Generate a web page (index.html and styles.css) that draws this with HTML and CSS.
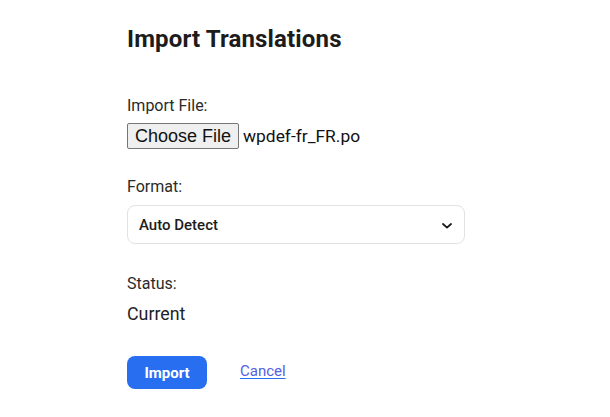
FILE: index.html
```html
<!DOCTYPE html>
<html lang="en">
<head>
<meta charset="utf-8">
<title>Import Translations</title>
<link rel="stylesheet" href="styles.css">
</head>
<body>
<main class="page">
  <h1 class="title">Import Translations</h1>

  <div class="field field-file">
    <div class="label">Import File:</div>
    <div class="file-row">
      <span class="file-btn">Choose File</span>
      <span class="file-name">wpdef-fr_FR.po</span>
    </div>
  </div>

  <div class="field field-format">
    <div class="label">Format:</div>
    <div class="select">
      <span class="select-value">Auto Detect</span>
      <svg class="chevron" width="10" height="6" viewBox="0 0 10 6" aria-hidden="true">
        <path d="M1 1 L5 4.6 L9 1" fill="none" stroke="#1a1a1a" stroke-width="1.8" stroke-linecap="round" stroke-linejoin="round"/>
      </svg>
    </div>
  </div>

  <div class="field field-status">
    <div class="label">Status:</div>
    <div class="status-value">Current</div>
  </div>

  <div class="actions">
    <button class="btn-import" type="button">Import</button>
    <a class="link-cancel" href="#">Cancel</a>
  </div>
</main>
</body>
</html>
```

FILE: styles.css
```css
html, body {
  margin: 0;
  padding: 0;
  background: #ffffff;
}

body {
  font-family: Roboto, "Liberation Sans", Arial, sans-serif;
  color: #222222;
}

.page {
  padding: 25px 0 0 127px;
  width: 338px;
}

.title {
  margin: 0;
  font-size: 24px;
  line-height: 28px;
  font-weight: 700;
  letter-spacing: 0.15px;
  color: #1c1c1c;
}

.field {
  display: flex;
  flex-direction: column;
}

.label {
  font-size: 16px;
  line-height: 20px;
  color: #2a2a2a;
}

.field-file {
  margin-top: 43px;
}

.field-file .label {
  margin-bottom: 7px;
}

.file-row {
  display: flex;
  align-items: center;
  gap: 4px;
}

.file-btn {
  box-sizing: border-box;
  height: 26px;
  width: 112px;
  display: inline-flex;
  align-items: center;
  justify-content: center;
  background: #efefef;
  border: 1px solid #767676;
  border-radius: 2px;
  color: #111111;
  font-family: "Liberation Sans", Arial, sans-serif;
  font-size: 18px;
}

.file-name {
  font-family: Roboto, "Liberation Sans", Arial, sans-serif;
  font-size: 17.4px;
  color: #111111;
}

.field-format {
  margin-top: 28px;
}

.field-format .label {
  margin-bottom: 8px;
}

.select {
  box-sizing: border-box;
  height: 39px;
  display: flex;
  align-items: center;
  justify-content: space-between;
  padding: 0 12px 0 11px;
  border: 1px solid #e2e2e2;
  border-radius: 8px;
  background: #ffffff;
}

.select-value {
  font-size: 15px;
  font-weight: 500;
  color: #1c1c1c;
  padding-top: 1px;
}

.chevron {
  display: block;
  margin-top: 2px;
}

.field-status {
  margin-top: 30px;
}

.field-status .label {
  margin-bottom: 9px;
}

.status-value {
  font-size: 17.8px;
  line-height: 22px;
  color: #1f1f1f;
}

.actions {
  margin-top: 31px;
  display: flex;
  align-items: center;
  gap: 33px;
}

.btn-import {
  box-sizing: border-box;
  width: 80px;
  height: 33px;
  border: none;
  border-radius: 8px;
  background: #286ef1;
  color: #ffffff;
  font-family: Roboto, "Liberation Sans", Arial, sans-serif;
  font-size: 15px;
  font-weight: 700;
  padding: 0;
  cursor: pointer;
}

.link-cancel {
  font-size: 15px;
  line-height: 18px;
  color: #5560e2;
  text-decoration: underline;
  text-decoration-color: #286ef1;
  text-underline-offset: 2px;
  margin-top: -3px;
}
```
